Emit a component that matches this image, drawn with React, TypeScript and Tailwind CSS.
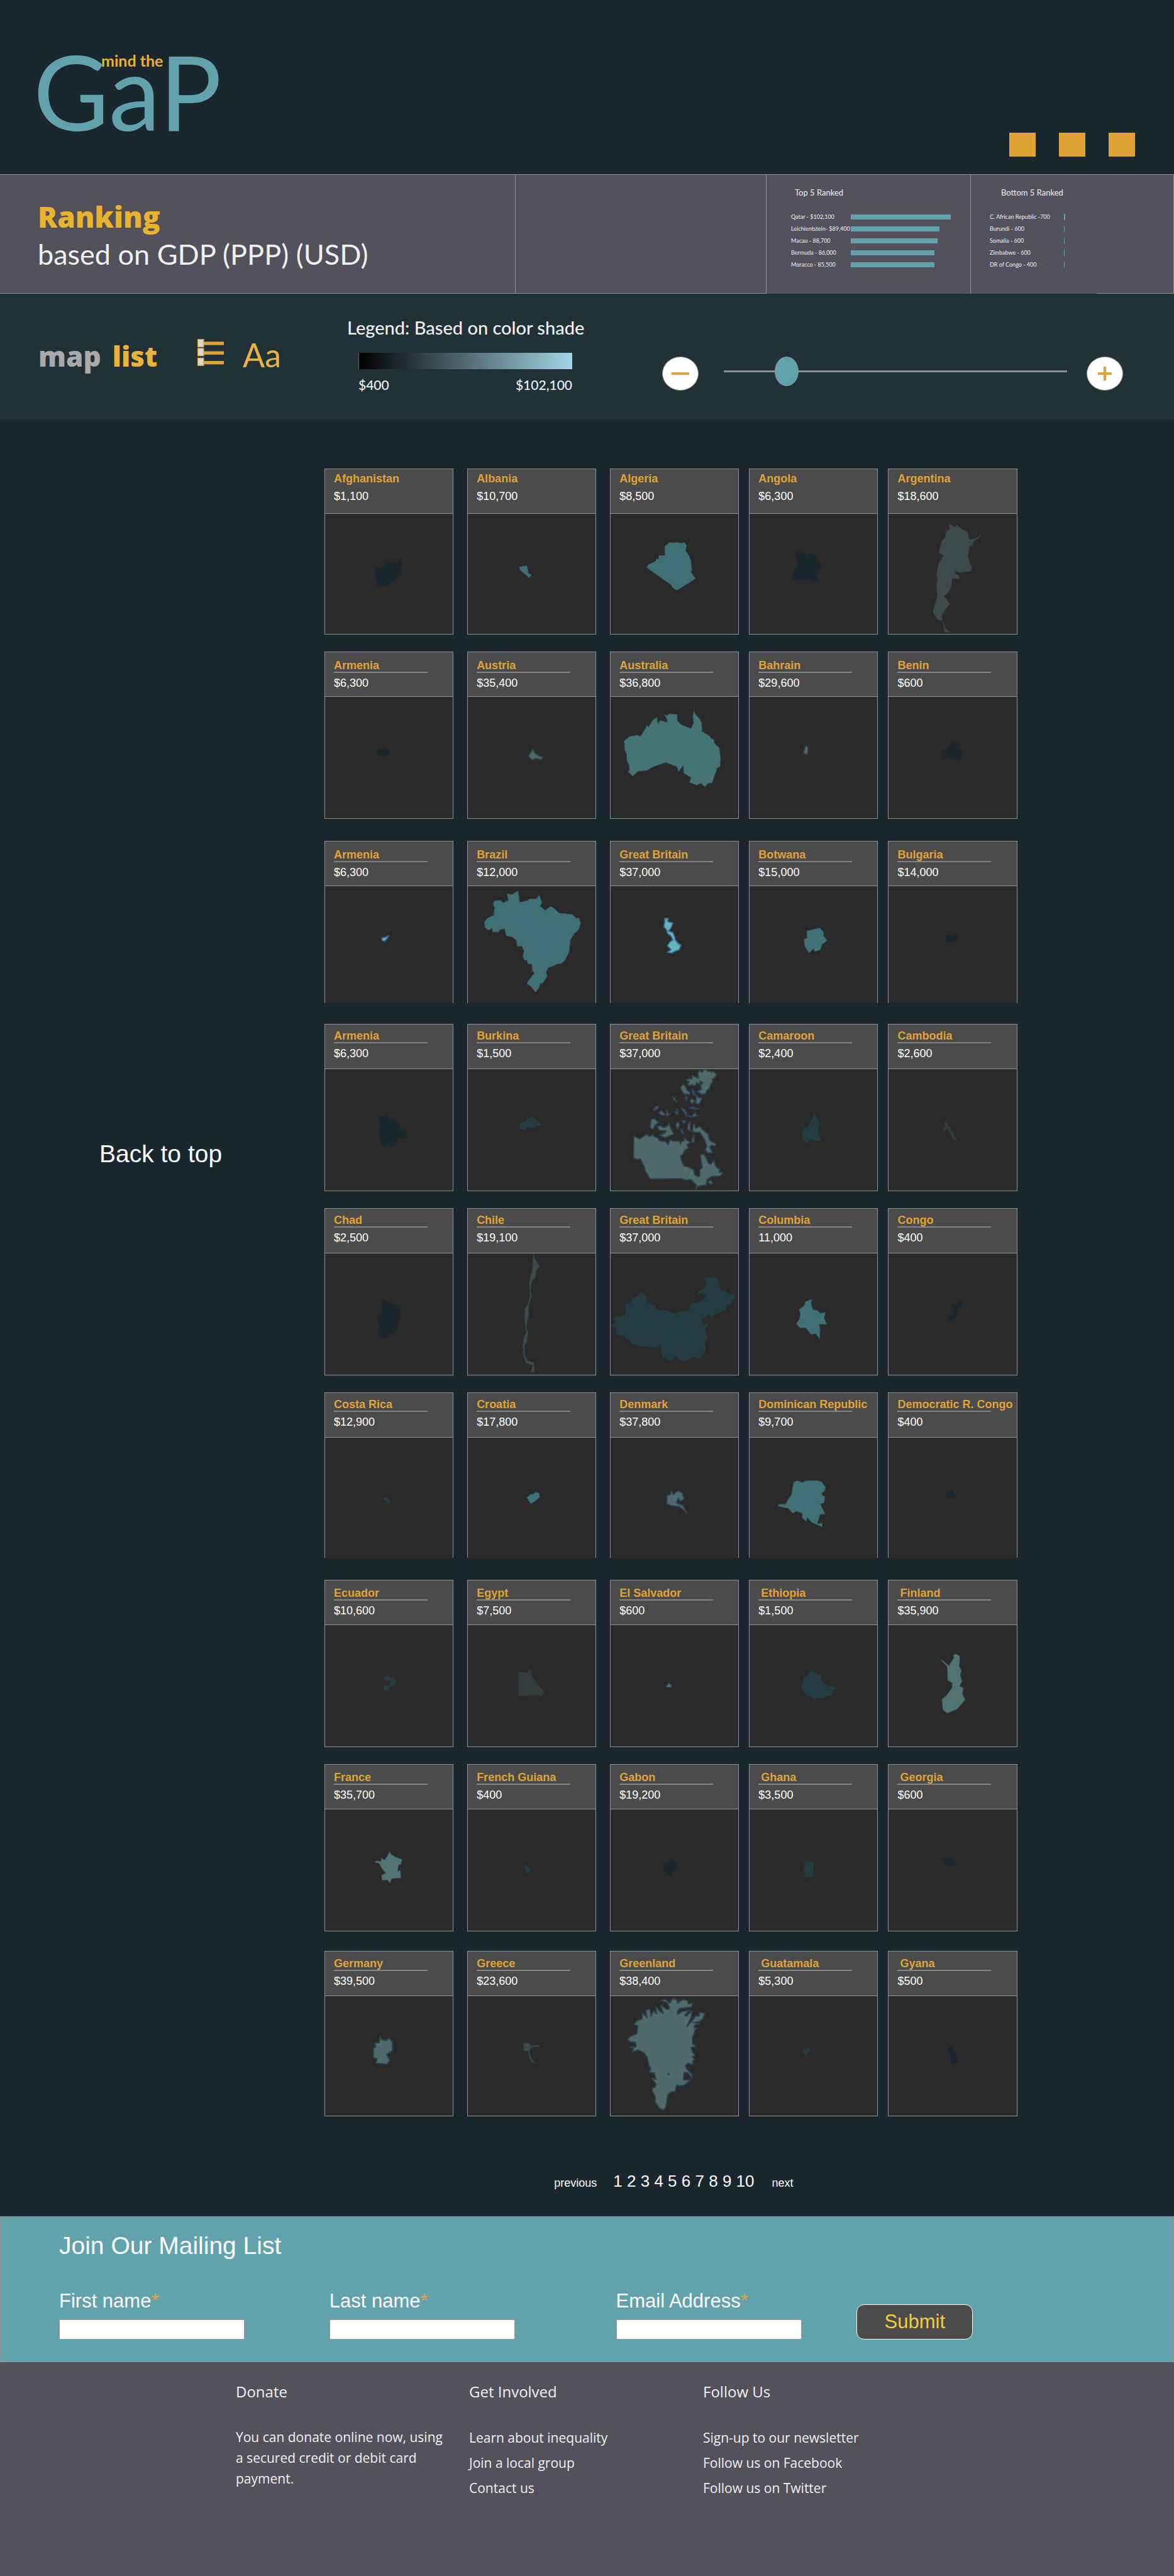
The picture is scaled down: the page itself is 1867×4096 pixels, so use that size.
import React from "react";

type Tone =
  | "night"
  | "deep"
  | "teal"
  | "slate"
  | "moss"
  | "ash"
  | "mist"
  | "ocean"
  | "bright";

const tones: Record<Tone, { fill: string; stroke: string; width: number }> = {
  night: { fill: "#1b272e", stroke: "#1b272e", width: 0 },
  deep: { fill: "#253d42", stroke: "#253d42", width: 0 },
  teal: { fill: "#417176", stroke: "#355c60", width: 1 },
  slate: { fill: "#4f6a6c", stroke: "#2f4350", width: 2 },
  moss: { fill: "#3d4b4a", stroke: "#2b3a41", width: 1 },
  ash: { fill: "#343d3e", stroke: "#2e3637", width: 1 },
  mist: { fill: "#527374", stroke: "#2e4754", width: 1 },
  ocean: { fill: "#467373", stroke: "#2b4450", width: 1 },
  bright: { fill: "#65b5c0", stroke: "#3d6a90", width: 2 },
};

interface Country {
  name: string;
  value: string;
  tone: Tone;
  view: string;
  d: string;
  indent?: boolean;
}

interface Row {
  pitch: string;
  pad: string;
  body: string;
  rule: boolean;
  open?: boolean;
  items: Country[];
}

const rows: Row[] = [
  {
    pitch: "h-[291px]",
    pad: "pt-[5px]",
    body: "h-[191px]",
    rule: false,
    items: [
      { name: "Afghanistan", value: "$1,100", tone: "night", view: "27 238 283 512", d: "M138,468 146,465 150,472 158,460 160,440 180,446 190,440 193,426 196,428 195,445 199,455 194,465 198,485 198,496 190,500 184,520 175,528 166,545 150,548 140,543 142,525 137,510Z" },
      { name: "Albania", value: "$10,700", tone: "teal", view: "342 238 283 512", d: "M456,465 465,462 472,459 474,468 476,492 483,498 478,510 468,494 459,480Z" },
      { name: "Algeria", value: "$8,500", tone: "teal", view: "656 238 283 512", d: "M776,376 787,360 795,362 803,360 812,364 820,360 824,373 822,395 829,415 834,438 836,478 834,487 844,514 803,564 794,553 790,540 736,467 740,455 756,440 758,430 763,432 763,416 777,416Z" },
      { name: "Angola", value: "$6,300", tone: "night", view: "960 238 283 512", d: "M1060,399 1078,397 1087,415 1097,406 1108,417 1110,434 1118,450 1119,468 1111,470 1110,508 1116,526 1098,526 1090,519 1056,519 1058,485 1067,455 1063,425Z" },
      { name: "Argentina", value: "$18,600", tone: "moss", view: "1264 238 283 512", d: "M1399,278 1405,288 1412,294 1416,284 1428,306 1437,312 1442,328 1442,345 1448,348 1464,336 1466,325 1466,340 1452,356 1450,375 1444,374 1440,420 1444,445 1449,465 1446,483 1422,489 1412,482 1411,492 1420,500 1421,516 1406,514 1404,525 1404,545 1397,573 1387,590 1392,600 1400,622 1390,645 1382,672 1383,695 1390,725 1402,743 1388,743 1384,695 1372,688 1362,656 1367,622 1372,590 1370,540 1373,515 1370,495 1375,450 1386,415 1376,405 1381,356 1390,338 1391,312 1399,306Z" },
    ],
  },
  {
    pitch: "h-[301px]",
    pad: "pt-[11px]",
    body: "h-[193px]",
    rule: true,
    items: [
      { name: "Armenia", value: "$6,300", tone: "night", view: "24 1018 283 517", d: "M138,1240 165,1238 166,1258 159,1270 145,1270 138,1252Z" },
      { name: "Austria", value: "$35,400", tone: "slate", view: "338 1018 283 517", d: "M482,1242 487,1258 495,1270 504,1274 500,1286 488,1280 480,1288 472,1270Z" },
      { name: "Australia", value: "$36,800", tone: "ocean", view: "652 1018 283 517", d: "M682,1205 695,1186 711,1180 718,1186 730,1150 731,1138 736,1146 745,1118 755,1104 757,1132 762,1118 778,1126 776,1110 770,1092 778,1098 780,1090 800,1092 800,1120 810,1138 830,1152 836,1130 834,1100 837,1076 840,1092 850,1112 854,1130 855,1165 872,1185 876,1198 881,1198 882,1215 893,1235 896,1280 895,1315 889,1320 884,1345 877,1385 868,1386 861,1402 852,1386 844,1395 827,1383 830,1362 814,1343 813,1310 803,1338 799,1316 774,1298 745,1318 732,1333 713,1335 701,1356 690,1335 694,1330 693,1310 688,1290 687,1260 683,1245Z" },
      { name: "Bahrain", value: "$29,600", tone: "slate", view: "957 1018 283 517", d: "M1081,1228 1086,1230 1087,1248 1084,1264 1076,1256Z" },
      { name: "Benin", value: "$600", tone: "night", view: "1264 1018 283 517", d: "M1404,1210 1412,1206 1421,1210 1421,1235 1429,1248 1424,1265 1427,1278 1419,1290 1400,1280 1382,1284 1384,1262 1381,1244 1394,1243 1398,1225Z" },
    ],
  },
  {
    pitch: "h-[291px]",
    pad: "pt-[11px]",
    body: "h-[186px]",
    rule: true,
    open: true,
    items: [
      { name: "Armenia", value: "$6,300", tone: "bright", view: "27 239 283 498", d: "M153,460 160,457 168,450 163,466 158,474 153,468Z" },
      { name: "Brazil", value: "$12,000", tone: "teal", view: "338 239 283 498", d: "M425,272 436,275 449,260 453,308 472,300 474,294 490,293 496,278 502,308 498,325 510,343 518,330 522,326 530,335 540,354 560,358 570,360 578,376 584,374 588,398 583,425 574,440 565,468 562,520 553,555 545,568 536,570 528,578 517,585 511,605 514,622 503,654 498,652 496,670 488,690 477,664 469,654 473,640 486,608 481,598 480,572 471,568 469,555 463,553 460,535 463,515 458,495 448,494 445,468 436,455 423,450 420,420 408,425 407,434 393,434 392,418 384,426 376,415 375,390 382,375 395,364 398,330 394,318 397,301 411,300 416,311 429,298 427,292Z" },
      { name: "Great Britain", value: "$37,000", tone: "bright", view: "652 239 283 498", d: "M772,376 780,376 778,390 790,396 785,420 780,430 790,436 794,455 796,470 802,484 808,490 804,510 796,515 788,524 778,520 786,510 778,492 783,478 790,468 786,452 778,440 776,425 770,412 772,392Z" },
      { name: "Botwana", value: "$15,000", tone: "teal", view: "960 239 283 498", d: "M1087,430 1116,417 1124,435 1124,452 1132,470 1120,488 1117,510 1105,517 1101,505 1092,524 1082,493 1081,465 1088,460Z" },
      { name: "Bulgaria", value: "$14,000", tone: "night", view: "1268 239 283 498", d: "M1394,455 1396,440 1405,448 1415,440 1423,446 1420,460 1420,470 1408,479 1397,476Z" },
    ],
  },
  {
    pitch: "h-[293px]",
    pad: "pt-[8px]",
    body: "h-[193px]",
    rule: true,
    items: [
      { name: "Armenia", value: "$6,300", tone: "night", view: "30 1019 283 518", d: "M145,1218 158,1220 168,1203 170,1230 182,1234 195,1255 196,1278 210,1280 213,1317 203,1312 190,1315 187,1340 176,1352 170,1340 160,1354 152,1330 150,1300 147,1288 152,1265 150,1235Z" },
      { name: "Burkina", value: "$1,500", tone: "deep", view: "344 1019 283 518", d: "M457,1272 460,1250 472,1242 478,1228 487,1222 497,1238 503,1250 509,1256 496,1262 492,1272 474,1268 470,1280Z" },
      { name: "Great Britain", value: "$37,000", tone: "slate", view: "10 17 988 930", d: "M190,530 235,552 262,535 292,515 300,530 325,530 335,518 345,532 375,545 388,565 435,572 455,598 470,560 500,570 542,568 552,592 562,568 578,568 582,545 600,560 625,580 600,595 612,620 590,632 575,655 565,675 550,678 558,715 575,758 610,768 655,790 658,825 685,840 700,838 700,790 720,770 712,730 705,672 735,672 750,700 765,735 785,748 808,715 822,760 855,790 850,805 878,810 860,835 790,840 755,865 750,905 690,912 670,935 675,905 650,880 630,862 595,868 560,855 315,858 300,830 280,800 270,760 240,705 210,708 188,695Z M650,440 662,435 665,470 700,455 720,480 765,515 775,560 800,578 825,590 815,608 790,600 775,615 800,655 765,660 740,635 755,610 740,560 720,530 700,500 645,500Z M372,455 395,450 420,465 445,455 460,432 475,470 500,515 460,530 430,542 390,525 430,505 440,490 385,485Z M325,400 350,398 380,425 350,450 345,470 330,478 315,460Z M685,45 700,28 720,40 730,22 745,20 765,35 780,30 790,42 805,32 830,60 815,85 795,95 800,115 785,130 775,165 755,180 745,205 715,210 700,200 680,190 715,170 705,145 725,120 700,110 700,135 675,120 665,145 640,135 620,145 605,130 620,115 592,102 615,90 640,92 640,68 665,75 690,88Z M570,130 590,150 600,175 625,195 620,215 600,205 590,215 565,190 550,160Z M675,215 690,235 715,240 705,270 685,290 670,275Z M485,225 500,238 510,228 512,250 525,268 502,256Z M340,330 360,305 382,298 375,320 355,330Z M380,350 395,345 402,335 415,350 440,368 410,372 395,362Z M445,325 455,355 470,360 440,378Z M505,345 525,340 520,322 533,335 528,368Z M555,315 580,325 600,355 600,380 580,350Z M600,372 640,375 665,352 678,375 640,385Z M615,315 640,306 690,322 650,322Z M520,430 535,420 542,450 530,475 516,455Z M562,412 590,412 580,435Z M608,440 625,420 625,490 606,480Z M555,475 568,485 575,515 560,505Z M645,545 655,522 658,575 635,575Z M760,880 785,868 800,895 785,900Z M585,232 605,232 598,260Z M640,170 655,185 665,220 645,205Z M620,260 640,245 662,262 640,280Z" },
      { name: "Camaroon", value: "$2,400", tone: "deep", view: "962 1019 283 518", d: "M1106,1210 1110,1225 1117,1250 1113,1290 1120,1318 1116,1326 1095,1318 1091,1335 1081,1322 1078,1290 1083,1270 1092,1265Z" },
      { name: "Cambodia", value: "$2,600", tone: "ash", view: "1266 1019 283 518", d: "M1388,1240 1396,1248 1398,1260 1404,1270 1404,1282 1410,1290 1412,1306 1418,1320 1408,1318 1404,1295 1396,1274 1388,1284 1386,1268 1392,1262Z" },
    ],
  },
  {
    pitch: "h-[293px]",
    pad: "pt-[8px]",
    body: "h-[193px]",
    rule: true,
    items: [
      { name: "Chad", value: "$2,500", tone: "night", view: "26 238 283 518", d: "M150,432 193,468 194,506 186,545 190,562 185,562 181,580 166,590 155,606 141,580 148,575 145,535 140,515 152,495 150,470 153,455Z" },
      { name: "Chile", value: "$19,100", tone: "moss", view: "340 238 283 518", d: "M485,238 489,262 499,292 492,310 489,345 482,355 479,400 482,420 478,440 475,465 475,500 471,535 470,560 474,575 471,615 466,630 466,670 472,695 486,702 488,743 480,744 484,715 468,705 463,670 462,625 465,590 469,575 466,530 466,475 473,455 478,420 476,370 478,340 483,310Z" },
      { name: "Great Britain", value: "$37,000", tone: "deep", view: "654 238 283 518", d: "M720,402 733,418 734,448 752,460 757,478 780,482 796,494 808,486 828,482 832,450 846,450 862,434 865,420 863,410 848,412 846,402 860,390 866,365 863,345 880,336 891,345 897,395 908,398 920,416 930,408 930,430 922,440 920,458 913,455 910,478 890,495 880,505 879,516 872,500 858,515 855,530 862,545 870,533 873,536 864,560 869,600 862,622 865,650 859,670 850,688 842,680 832,686 820,698 808,694 800,678 796,676 792,692 780,694 766,668 766,630 762,635 745,642 735,635 722,635 702,625 697,610 688,605 682,588 666,584 667,560 655,545 666,530 658,518 667,505 676,508 687,498 688,470 686,455 700,450 702,430 712,425Z" },
      { name: "Columbia", value: "11,000", tone: "teal", view: "958 238 283 518", d: "M1096,434 1094,450 1098,478 1109,482 1114,494 1126,490 1123,515 1129,540 1112,540 1114,560 1113,602 1105,580 1094,583 1083,555 1069,555 1062,538 1069,518 1071,495 1068,478 1080,460 1082,444Z" },
      { name: "Congo", value: "$400", tone: "night", view: "1266 238 283 518", d: "M1423,436 1430,438 1428,465 1420,475 1418,500 1411,520 1397,523 1396,505 1408,500 1410,485 1405,455 1415,458Z" },
    ],
  },
  {
    pitch: "h-[298px]",
    pad: "pt-[8px]",
    body: "h-[191px]",
    rule: true,
    open: true,
    items: [
      { name: "Costa Rica", value: "$12,900", tone: "deep", view: "30 1023 283 512", d: "M158,1277 168,1278 175,1292 174,1304 166,1295 160,1290Z" },
      { name: "Croatia", value: "$17,800", tone: "teal", view: "340 1023 283 512", d: "M471,1278 479,1265 487,1262 490,1255 498,1260 499,1277 488,1295 479,1304Z" },
      { name: "Denmark", value: "$37,800", tone: "slate", view: "654 1023 283 512", d: "M779,1270 786,1265 789,1250 793,1265 803,1250 812,1257 817,1285 808,1295 804,1280 800,1300 808,1308 814,1312 823,1343 806,1316 790,1313 779,1306Z" },
      { name: "Dominican Republic", value: "$9,700", tone: "teal", view: "962 1023 283 512", d: "M1060,1212 1068,1206 1078,1214 1088,1207 1112,1206 1122,1212 1130,1235 1128,1250 1122,1258 1123,1270 1129,1275 1127,1300 1118,1306 1122,1320 1129,1348 1118,1350 1112,1388 1123,1388 1123,1404 1110,1392 1100,1384 1090,1362 1087,1380 1079,1364 1079,1345 1066,1336 1058,1345 1048,1324 1025,1314 1027,1307 1042,1307 1048,1285 1055,1267Z" },
      { name: "Democratic R. Congo", value: "$400", tone: "night", view: "1270 1023 283 512", d: "M1413,1237 1413,1262 1420,1264 1419,1280 1398,1280 1397,1262 1403,1256 1408,1252Z" },
    ],
  },
  {
    pitch: "h-[293px]",
    pad: "pt-[10px]",
    body: "h-[193px]",
    rule: true,
    items: [
      { name: "Ecuador", value: "$10,600", tone: "deep", view: "27 252 283 517", d: "M155,486 158,475 165,465 174,478 182,478 184,495 178,512 170,516 165,534 155,526 157,510 170,508 172,490Z" },
      { name: "Egypt", value: "$7,500", tone: "ash", view: "342 252 283 517", d: "M454,450 474,456 478,440 483,444 484,470 511,538 504,556 500,550 454,554Z" },
      { name: "El Salvador", value: "$600", tone: "teal", view: "656 252 283 517", d: "M785,500 790,506 790,517 779,515Z" },
      { name: "Ethiopia", value: "$1,500", tone: "deep", view: "960 252 283 517", indent: true, d: "M1097,446 1118,466 1119,487 1130,507 1151,518 1140,552 1128,557 1122,565 1108,563 1105,571 1093,554 1085,550 1074,517 1079,492 1080,474 1087,468Z" },
      { name: "Finland", value: "$35,900", tone: "mist", view: "1264 252 283 517", indent: true, d: "M1414,375 1422,384 1422,410 1420,425 1426,445 1423,465 1427,490 1422,512 1430,520 1428,545 1434,570 1416,610 1394,628 1384,612 1382,568 1393,550 1405,518 1405,498 1395,488 1394,430 1390,420 1380,402 1384,402 1398,425 1404,405 1408,395 1408,378Z" },
    ],
  },
  {
    pitch: "h-[297px]",
    pad: "pt-[10px]",
    body: "h-[193px]",
    rule: true,
    items: [
      { name: "France", value: "$35,700", tone: "mist", view: "24 1037 283 517", d: "M167,1216 170,1228 180,1240 195,1250 192,1270 187,1275 185,1300 191,1296 192,1330 172,1332 168,1352 162,1338 150,1340 149,1318 158,1308 150,1290 144,1268 134,1262 136,1256 148,1258 148,1244 156,1252 162,1235Z" },
      { name: "French Guiana", value: "$400", tone: "deep", view: "338 1037 283 517", d: "M465,1275 478,1290 472,1308 466,1308 467,1296 463,1288Z" },
      { name: "Gabon", value: "$19,200", tone: "night", view: "652 1037 283 517", d: "M770,1260 776,1268 782,1262 783,1249 795,1254 800,1284 796,1300 789,1298 788,1330 778,1310 768,1294Z" },
      { name: "Ghana", value: "$3,500", tone: "deep", view: "957 1037 283 517", indent: true, d: "M1078,1262 1090,1258 1099,1264 1098,1285 1098,1320 1088,1327 1080,1325 1080,1305 1076,1298 1080,1285Z" },
      { name: "Georgia", value: "$600", tone: "night", view: "1264 1037 283 517", indent: true, d: "M1381,1244 1398,1246 1408,1250 1416,1270 1406,1272 1398,1276 1388,1268 1386,1254Z" },
    ],
  },
  {
    pitch: "h-[262px]",
    pad: "pt-[9px]",
    body: "h-[190px]",
    rule: true,
    items: [
      { name: "Germany", value: "$39,500", tone: "slate", view: "27 358 283 683", d: "M149,588 152,606 163,612 168,598 176,620 176,670 163,690 170,722 165,746 140,742 142,715 134,708 134,656 139,650 138,626 147,624Z" },
      { name: "Greece", value: "$23,600", tone: "moss", view: "338 358 283 683", d: "M461,624 474,628 478,642 496,638 498,646 480,650 474,670 478,712 486,735 492,746 480,735 474,712 472,672 462,670Z" },
      { name: "Greenland", value: "$38,400", tone: "slate", view: "2 12 988 916", d: "M485,30 515,42 520,65 565,38 600,48 600,70 635,68 630,95 540,105 520,125 520,152 555,130 610,120 575,160 590,165 630,125 625,170 592,245 640,195 660,165 685,165 695,135 730,145 715,185 690,205 640,215 690,222 650,235 650,255 672,258 655,270 645,310 635,320 635,375 665,398 625,405 635,440 655,465 635,475 650,500 635,510 640,538 600,525 580,545 590,570 630,610 635,640 600,600 570,595 565,655 620,655 570,695 530,700 515,690 500,745 470,745 445,765 435,830 425,870 410,885 380,870 345,820 350,785 325,740 325,715 345,710 355,685 320,640 355,650 340,600 305,595 312,565 300,540 285,480 260,445 215,425 170,440 180,410 150,402 200,400 195,365 155,362 133,345 150,325 205,300 215,240 185,230 205,200 245,188 250,140 285,178 275,120 305,110 315,165 335,125 360,150 350,90 385,130 410,145 390,80 440,115 460,105 440,60 395,48 420,35 460,65Z M448,604 455,609 450,615 444,610Z" },
      { name: "Guatamala", value: "$5,300", tone: "deep", view: "960 358 283 683", indent: true, d: "M1096,646 1092,680 1085,700 1077,682 1080,664Z" },
      { name: "Gyana", value: "$500", tone: "night", view: "1268 358 283 683", indent: true, d: "M1407,640 1411,655 1412,672 1420,680 1417,700 1423,735 1411,748 1406,740 1405,690 1398,678 1401,655Z" },
    ],
  },
];

const columnGap = ["pr-[22px]", "pr-[22px]", "pr-4", "pr-4", "pr-0"];

function CountryCard({ item, row }: { item: Country; row: Row }) {
  const tone = tones[item.tone];
  return (
    <article className={row.open ? "border-x border-t border-[#8f9092]" : "border border-[#8f9092]"}>
      <header className={`h-[71px] border-b border-[#8f9092] bg-[#4b4b4b] pl-[14px] ${row.pad}`}>
        <h2
          className={`h-5 whitespace-nowrap text-[18px] font-bold leading-5 text-[#e0a335] ${item.indent ? "pl-1" : ""}`}
        >
          {item.name}
        </h2>
        <div className={row.rule ? "h-2 w-[149px] border-t-2 border-[#858585]" : "h-2"} />
        <p className="h-5 text-[18px] leading-5 text-white">{item.value}</p>
      </header>
      <svg
        className={`block w-full bg-[#2a2a2a] ${row.body}`}
        viewBox={item.view}
        preserveAspectRatio="none"
        aria-hidden="true"
      >
        <path
          d={item.d}
          fill={tone.fill}
          stroke={tone.stroke}
          strokeWidth={tone.width}
          strokeLinejoin="round"
          vectorEffect="non-scaling-stroke"
        />
      </svg>
    </article>
  );
}

const topRanked = [
  { label: "Qatar - $102,100", width: 159 },
  { label: "Leichientstein- $89,400", width: 141 },
  { label: "Macau - 88,700", width: 138 },
  { label: "Bermuda - 86,000", width: 133 },
  { label: "Moracco - 85,500", width: 133 },
];

const bottomRanked = [
  { label: "C. African Republic -700", width: 2 },
  { label: "Burundi - 600", width: 1 },
  { label: "Somalia - 600", width: 1 },
  { label: "Zimbabwe - 600", width: 1 },
  { label: "DR of Congo - 400", width: 1 },
];

const fields = [
  { id: "first-name", label: "First name", type: "text" },
  { id: "last-name", label: "Last name", type: "text" },
  { id: "email", label: "Email Address", type: "email" },
];

const linkColumns = [
  { title: "Get Involved", links: ["Learn about inequality", "Join a local group", "Contact us"] },
  { title: "Follow Us", links: ["Sign-up to our newsletter", "Follow us on Facebook", "Follow us on Twitter"] },
];

function SiteHeader() {
  return (
    <header className="flex h-[277px] items-start justify-between bg-[#1b272e] pl-[53px] pr-[62px]">
      <a href="#home" className="relative mt-[62px] block font-['Lato']">
        <span className="block text-[165px] leading-[164px] text-[#62a2ad]">GaP</span>
        <span className="absolute left-[108px] top-[20px] whitespace-nowrap text-[25px] font-bold leading-7 text-[#e9b32d]">
          mind the
        </span>
      </a>
      <nav className="flex gap-[37px] self-end pb-7">
        <button type="button" aria-label="Home" className="h-[38px] w-[42px] bg-[#e0a335]" />
        <button type="button" aria-label="Search" className="h-[38px] w-[42px] bg-[#e0a335]" />
        <button type="button" aria-label="Share" className="h-[38px] w-[42px] bg-[#e0a335]" />
      </nav>
    </header>
  );
}

function Banner() {
  return (
    <section className="grid h-[190px] grid-cols-[820fr_399fr_325fr_323fr] border-t border-[#909192] bg-[#53515c] font-['Lato']">
      <div className="border-b border-r border-[#909192] pl-[60px] pt-[36px]">
        <h1>
          <span className="block font-['Open_Sans'] text-[46px] font-extrabold leading-[60px] text-[#e9b32d]">
            Ranking
          </span>
          <span className="block whitespace-nowrap text-[45px] leading-[60px] text-[#f0f0f2]">
            based on GDP (PPP) (USD)
          </span>
        </h1>
      </div>
      <div className="border-b border-r border-[#909192]" />
      <div className="border-r border-[#909192] pl-[39px] pt-[20px] text-[#f0f0f2]">
        <h2 className="pl-[6px] text-[13px] leading-4">Top 5 Ranked</h2>
        <ul className="pt-[21px]">
          {topRanked.map((r) => (
            <li key={r.label} className="flex h-[19px] items-center">
              <span className="w-[95px] whitespace-nowrap text-[9px] leading-[19px]">{r.label}</span>
              <span className="h-2 bg-[#62a2ad]" style={{ width: r.width }} />
            </li>
          ))}
        </ul>
      </div>
      <div className="flex border-r border-[#909192]">
        <div className="w-[200px] pl-[30px] pt-[20px] text-[#f0f0f2]">
          <h2 className="whitespace-nowrap pl-[18px] text-[13px] leading-4">Bottom 5 Ranked</h2>
          <ul className="pt-[21px]">
            {bottomRanked.map((r) => (
              <li key={r.label} className="flex h-[19px] items-center">
                <span className="w-[118px] whitespace-nowrap text-[9px] leading-[19px]">{r.label}</span>
                <span className="h-[10px] bg-[#62a2ad]" style={{ width: r.width }} />
              </li>
            ))}
          </ul>
        </div>
        <div className="flex-1 border-b border-[#909192]" />
      </div>
    </section>
  );
}

function Toolbar() {
  return (
    <section className="grid h-[200px] grid-cols-[314fr_72fr_166fr_501fr_814fr] bg-[#213138] font-['Lato']">
      <nav className="flex gap-[18px] pl-[61px] pt-[69px] font-['Open_Sans'] text-[44px] font-extrabold leading-[60px]">
        <a href="#map" className="text-[#a9a9a9]">map</a>
        <a href="#list" className="text-[#e9b33c]">list</a>
      </nav>
      <button type="button" aria-label="List view" className="self-start pt-[72px]">
        <svg className="block h-[43px] w-[42px]" viewBox="72 78 204 207" aria-hidden="true">
          {[78, 147, 222].map((y, i) => (
            <g key={y}>
              <rect x="120" y={[98, 172, 247][i]} width="156" height="26" fill="#e0a335" />
              <rect x="75" y={y + 3} width="45" height="57" fill="#d8d8da" stroke="#e3ac4b" strokeWidth="6" />
            </g>
          ))}
        </svg>
      </button>
      <button
        type="button"
        className="self-start pt-[67px] text-left text-[52px] leading-[60px] text-[#e9b33c]"
      >
        Aa
      </button>
      <div className="pt-[34px] text-[#f0f0f2]">
        <p className="whitespace-nowrap text-[29px] font-medium leading-10">Legend: Based on color shade</p>
        <div className="ml-[18px] mt-5 h-[26px] w-[340px] border-l border-[#666] bg-linear-to-r/srgb from-black to-[#a3d5e6]" />
        <div className="ml-[18px] mt-[10px] flex w-[340px] justify-between text-[21px] font-medium leading-[30px]">
          <span>$400</span>
          <span>$102,100</span>
        </div>
      </div>
      <div className="flex items-start pr-[81px] pt-[100px]">
        <button
          type="button"
          aria-label="Zoom out"
          className="flex h-[54px] w-[58px] shrink-0 items-center justify-center rounded-[50%] border border-[#909090] bg-white"
        >
          <span className="h-1 w-7 bg-[#e0a335]" />
        </button>
        <input
          type="range"
          aria-label="Zoom level"
          min={0}
          max={100}
          defaultValue={16}
          className="ml-10 mr-[31px] h-[47px] min-w-0 flex-1 appearance-none bg-transparent [&::-webkit-slider-runnable-track]:h-[3px] [&::-webkit-slider-runnable-track]:bg-[#8d9092] [&::-webkit-slider-thumb]:-mt-[22px] [&::-webkit-slider-thumb]:h-[47px] [&::-webkit-slider-thumb]:w-[38px] [&::-webkit-slider-thumb]:appearance-none [&::-webkit-slider-thumb]:rounded-[50%] [&::-webkit-slider-thumb]:border [&::-webkit-slider-thumb]:border-[#8d9092] [&::-webkit-slider-thumb]:bg-[#62a2ad]"
        />
        <button
          type="button"
          aria-label="Zoom in"
          className="flex h-[54px] w-[58px] shrink-0 items-center justify-center rounded-[50%] border border-[#909090] bg-white"
        >
          <svg className="h-[22px] w-[22px]" viewBox="0 0 22 22" aria-hidden="true">
            <path d="M9 0h4v9h9v4h-9v9H9v-9H0V9h9z" fill="#e0a335" />
          </svg>
        </button>
      </div>
    </section>
  );
}

function Pagination() {
  return (
    <nav className="flex items-baseline pb-[38px] pl-[47.2%] pt-[89px] leading-[30px] text-white">
      <a href="#previous" className="text-[18px]">previous</a>
      <span className="ml-[26px] mr-7 whitespace-nowrap text-[26px]">
        {[1, 2, 3, 4, 5, 6, 7, 8, 9, 10].map((n) => (
          <React.Fragment key={n}>
            <a href={`#page-${n}`}>{n}</a>
            {n < 10 ? " " : null}
          </React.Fragment>
        ))}
      </span>
      <a href="#next" className="text-[18px]">next</a>
    </nav>
  );
}

function MailingList() {
  return (
    <form
      className="border border-[#8c9698] bg-[#62a2ad] pb-[35px] pl-[93px] pt-[24px] text-white"
      onSubmit={(e) => e.preventDefault()}
    >
      <h2 className="text-[39px] leading-[44px]">Join Our Mailing List</h2>
      <div className="grid grid-cols-[430fr_456fr_383fr_504fr] pt-12">
        {fields.map((f) => (
          <div key={f.id}>
            <label htmlFor={f.id} className="block whitespace-nowrap text-[31px] leading-9">
              {f.label}
              <span className="text-[#e0a335]">*</span>
            </label>
            <input
              id={f.id}
              type={f.type}
              className="mt-[11px] block h-8 w-[295px] border border-[#999] bg-white px-2 text-[18px] text-black"
            />
          </div>
        ))}
        <button
          type="submit"
          className="h-14 w-[185px] self-end rounded-[12px] border border-white bg-[#4b4b4b] text-[31px] leading-9 text-[#f0cf3b]"
        >
          Submit
        </button>
      </div>
    </form>
  );
}

function SiteFooter() {
  return (
    <footer className="grid flex-1 grid-cols-[371fr_372fr_749fr] content-start bg-[#53515c] pb-[110px] pl-[375px] pt-[29px] font-['Open_Sans'] text-[#f0f0f2]">
      <section>
        <h3 className="text-[24px] font-medium leading-9">Donate</h3>
        <p className="w-[340px] pt-[38px] text-[21px] leading-[33px]">
          You can donate online now, using a secured credit or debit card payment.
        </p>
      </section>
      {linkColumns.map((c) => (
        <section key={c.title}>
          <h3 className="text-[24px] font-medium leading-9">{c.title}</h3>
          <ul className="pt-[35px] text-[21px] leading-10">
            {c.links.map((l) => (
              <li key={l}>
                <a href="#more">{l}</a>
              </li>
            ))}
          </ul>
        </section>
      ))}
    </footer>
  );
}

export default function App() {
  return (
    <div className="flex min-h-screen flex-col bg-[#1b272e] font-['Liberation_Sans',Arial,sans-serif]">
      <SiteHeader />
      <Banner />
      <Toolbar />
      <main>
        <div className="flex pt-[78px]">
          <aside className="w-[27.64%] shrink-0 pl-[158px] pt-[1068px]">
            <a href="#top" className="whitespace-nowrap text-[39px] leading-[44px] text-white">
              Back to top
            </a>
          </aside>
          <div className="w-[59%]">
            {rows.map((row, r) => (
              <div
                key={r}
                className={`grid grid-cols-[227fr_227fr_221fr_221fr_205fr] items-start ${row.pitch}`}
              >
                {row.items.map((item, c) => (
                  <div key={c} className={`min-w-0 ${columnGap[c]}`}>
                    <CountryCard item={item} row={row} />
                  </div>
                ))}
              </div>
            ))}
          </div>
        </div>
        <Pagination />
      </main>
      <MailingList />
      <SiteFooter />
    </div>
  );
}
